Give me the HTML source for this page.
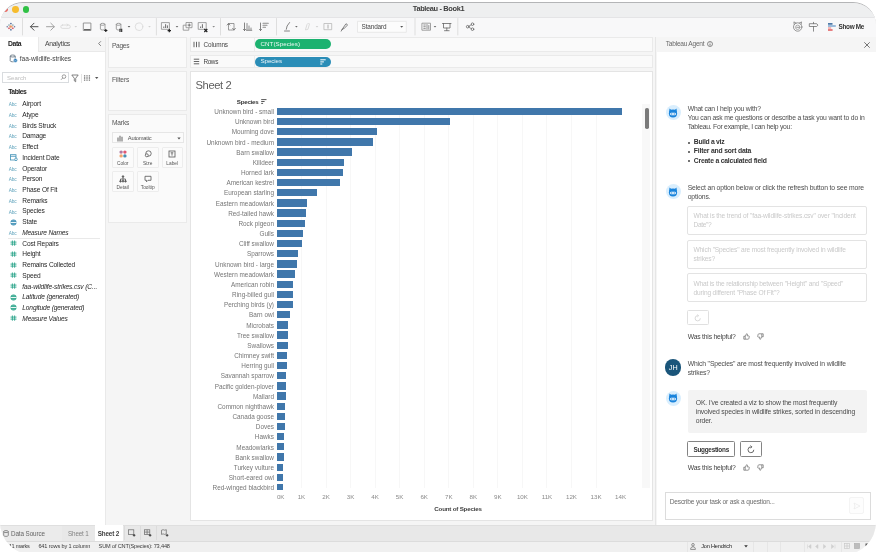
<!DOCTYPE html>
<html><head><meta charset="utf-8"><title>Tableau - Book1</title>
<style>
*{box-sizing:border-box;margin:0;padding:0}
html,body{width:876px;height:552px;overflow:hidden;background:#fff}
body{font-family:"Liberation Sans",sans-serif;font-size:6.6px;color:#333;position:relative}
#win{will-change:transform;position:absolute;left:0;top:2px;width:876px;height:553px;border-radius:23px 23px 33px 33px;overflow:hidden;background:#f5f5f5;border-top:1px solid #b4b5b7}
.a{position:absolute;white-space:nowrap;line-height:1}
svg{position:absolute;overflow:visible}
</style></head><body>
<div id="win">

<div class="a" style="left:0px;top:0px;width:876px;height:14px;background:#eeeff0"></div>
<div class="a" style="left:0px;top:14px;width:876px;height:19.5px;background:#f8f8f9;border-top:1px solid #e4e4e6"></div>
<div class="a" style="left:1.8px;top:3.3px;width:6.2px;height:6.2px;border-radius:50%;background:#ec5d55"></div>
<div class="a" style="left:12.2px;top:3px;width:6.8px;height:6.8px;border-radius:50%;background:#f6bc2e"></div>
<div class="a" style="left:22.5px;top:3px;width:6.8px;height:6.8px;border-radius:50%;background:#2fc145"></div>
<div class="a" style="left:407.75px;width:61.5px;text-align:center;top:2.47px;font-size:7.4px;color:#3c3c3c;letter-spacing:-0.34px;font-weight:bold;">Tableau - Book1</div>
<svg style="left:0px;top:14px" width="876" height="19" viewBox="0 0 876 19" fill="none" stroke="#555" stroke-width="0.900" stroke-linecap="round" stroke-linejoin="round"><g transform="translate(10.900,9.700) scale(0.660) translate(-10.500,-9.700)" stroke-linecap="butt"><path d="M10.500 7v5.400M7.800 9.700h5.400" stroke="#e8762c" stroke-width="1.100"/><path d="M7.600 6v2.600M6.300 7.300h2.600M13.400 6v2.600M12.100 7.300h2.600" stroke="#7099a6" stroke-width="0.900"/><path d="M7.600 10.800v2.600M6.300 12.100h2.600M13.400 10.800v2.600M12.100 12.100h2.600" stroke="#c72035" stroke-width="0.900"/><path d="M10.500 3.800v2.400M9.300 5h2.400M10.500 13.200v2.400M9.300 14.400h2.400" stroke="#1f447e" stroke-width="0.900"/><path d="M5 8.500v2.400M3.800 9.700h2.400M16 8.500v2.400M14.800 9.700h2.400" stroke="#5b6591" stroke-width="0.900"/></g><path d="M22.5 1.500v16.500" stroke="#dedede" stroke-width="1"/><path d="M38 9.700h-7.500M34 6.200l-3.500 3.500 3.500 3.500" stroke="#505050" stroke-width="1"/><path d="M46.500 9.700h7.800M50.800 6.200l3.500 3.500-3.500 3.500" stroke="#a2a2a2" stroke-width="1"/><rect x="60.800" y="8" width="9.500" height="3.400" rx="1.700" stroke="#d6d6d6" stroke-width="0.800"/><path d="M67 7l1.200 1-1.200 1" stroke="#d6d6d6" stroke-width="0.700"/><path d="M74.5 9l1.300 1.600 1.300-1.600z" fill="#d0d0d0" stroke="none"/><rect x="83.700" y="6" width="7.200" height="7.500" stroke="#8c8c8c" stroke-width="0.900"/><path d="M84 12.600h6.600" stroke="#666" stroke-width="1.400" stroke-linecap="butt"/><path d="M100.400 7.300v4.700a2.300 1 0 0 0 4.600 0V7.300a2.300 1 0 0 0 -4.600 0a2.300 1 0 0 0 4.600 0" stroke="#8c8c8c" stroke-width="0.800"/><path d="M104.200 13.500h3.200M105.800 11.900v3.200" stroke="#222" stroke-width="1.200" stroke-linecap="butt"/><path d="M116.300 7.300v4.700a2.300 1 0 0 0 4.600 0V7.300a2.300 1 0 0 0 -4.600 0a2.300 1 0 0 0 4.600 0" stroke="#8c8c8c" stroke-width="0.800"/><path d="M120 11.800v3.200M121.700 11.800v3.200" stroke="#222" stroke-width="1.100" stroke-linecap="butt"/><path d="M127.7 9l1.300 1.600 1.300-1.600z" fill="#555" stroke="none"/><circle cx="139" cy="9.700" r="3.800" stroke="#d8d8d8" stroke-width="0.800"/><path d="M148.2 9l1.300 1.600 1.300-1.600z" fill="#d0d0d0" stroke="none"/><path d="M156.4 1.500v16.500" stroke="#dedede" stroke-width="1"/><rect x="161.800" y="5.600" width="7.600" height="6.700" stroke="#8c8c8c" stroke-width="0.800"/><path d="M163.800 11v-1.500M165.600 11v-3.800M167.400 11v-2.600" stroke="#4a4a4a" stroke-width="0.800" stroke-linecap="butt"/><path d="M167.600 13.600h3.400M169.300 11.900v3.400" stroke="#222" stroke-width="1.200" stroke-linecap="butt"/><path d="M175.7 9l1.300 1.600 1.300-1.600z" fill="#666" stroke="none"/><rect x="183.600" y="8.200" width="5.200" height="5" stroke="#8c8c8c" stroke-width="0.800"/><rect x="186.400" y="5.500" width="5.600" height="5.200" stroke="#8c8c8c" stroke-width="0.800" fill="#f8f8f9"/><path d="M188 8.100h2.400M189.200 6.900v2.400" stroke="#4a4a4a" stroke-width="0.700"/><rect x="198.600" y="5.600" width="7.600" height="6.700" stroke="#8c8c8c" stroke-width="0.800"/><path d="M200.600 11v-1.500M202.400 11v-3.800" stroke="#4a4a4a" stroke-width="0.800" stroke-linecap="butt"/><path d="M204.300 12l3 3M207.300 12l-3 3" stroke="#222" stroke-width="1.200" stroke-linecap="butt"/><path d="M212.39999999999998 9l1.300 1.600 1.300-1.600z" fill="#888" stroke="none"/><path d="M220.5 1.500v16.500" stroke="#dedede" stroke-width="1"/><path d="M228.500 6.500h5.500v6.500h-5.500z" stroke="#8c8c8c" stroke-dasharray="1.200 0.800" stroke-width="0.900"/><path d="M227.200 8l1.300-1.300 1.300 1.300M232.700 11.500l1.300 1.300 1.300-1.300" stroke="#555" stroke-width="0.800"/><path d="M244.500 6v7.500M243.400 12.400l1.100 1.100 1.100-1.100" stroke="#666" stroke-width="0.800"/><path d="M247 6.500v6.500M249 9v4M251 11v2M246.500 13.300h5.300" stroke="#8c8c8c" stroke-width="1"/><path d="M260.500 6v7.500M259.400 12.400l1.100 1.100 1.100-1.100" stroke="#666" stroke-width="0.800"/><path d="M263 6.300h5.300M263 8.300h4M263 10.300h2.500" stroke="#8c8c8c" stroke-width="1.100"/><path d="M276.5 1.500v16.500" stroke="#dedede" stroke-width="1"/><path d="M286.300 12.300l0.800-3.300 2.500-3.500M284.500 14h5" stroke="#777" stroke-width="0.900"/><path d="M295.09999999999997 9l1.300 1.600 1.300-1.600z" fill="#666" stroke="none"/><path d="M305.500 12.500l1.500-5 1.500-1.500 1 1-1.500 5z" stroke="#d8d8d8" stroke-width="0.900"/><path d="M315.7 9l1.300 1.600 1.300-1.600z" fill="#d0d0d0" stroke="none"/><rect x="324.300" y="6.500" width="7.400" height="6.200" stroke="#b0b0b0" stroke-width="0.700"/><path d="M328 8v3.200" stroke="#999" stroke-width="0.800"/><path d="M342.200 12.300l3.800-5.600 1.600 1.300-2.800 2.800zM342.200 12.300l-1 1.800" stroke="#666" stroke-width="0.800"/><rect x="357.900" y="4.300" width="48.400" height="11" fill="#fcfcfc" stroke="#e6e6e6"/><path d="M400.200 9l1.500 1.800 1.500-1.800z" fill="#555" stroke="none"/><path d="M415 1.500v16.500" stroke="#dedede" stroke-width="1"/><rect x="422.300" y="6.200" width="8.200" height="7" stroke="#8c8c8c" stroke-width="0.800"/><path d="M423.800 8h1.500M423.800 9.700h1.500M423.800 11.400h1.500M427 7.500v4.500M428.800 8.500v3.500" stroke="#666" stroke-width="0.700"/><path d="M433.7 9l1.300 1.600 1.300-1.600z" fill="#666" stroke="none"/><path d="M442.500 6.500h8.500M443.500 6.500v4.500h6.500v-4.500M446.800 11v2.500M444.500 13.700h4.600" stroke="#666" stroke-width="0.800"/><path d="M457.8 1.500v16.500" stroke="#dedede" stroke-width="1"/><circle cx="467.700" cy="9.700" r="1.300" stroke="#666" stroke-width="0.800"/><circle cx="472.500" cy="7.200" r="1.300" stroke="#666" stroke-width="0.800"/><circle cx="472.500" cy="12.200" r="1.300" stroke="#666" stroke-width="0.800"/><path d="M468.900 9.100l2.400-1.300M468.900 10.300l2.400 1.300" stroke="#666" stroke-width="0.700"/><circle cx="797.700" cy="10" r="4.200" stroke="#808080" stroke-width="0.800"/><circle cx="797.700" cy="10.300" r="2.200" stroke="#909090" stroke-width="0.700"/><path d="M794.200 7.300l-0.300-2.400 2.200 1.200M801.200 7.300l0.300-2.400-2.200 1.200" stroke="#808080" stroke-width="0.800"/><path d="M796.700 10.300h2" stroke="#808080" stroke-width="0.800"/><path d="M809.700 6.700h7l1.200 1.400-1.200 1.400h-7zM813.500 5.300v1.400M813.500 9.500v4.700" stroke="#707070" stroke-width="0.800"/><path d="M828 6.800h4.500" stroke="#4e79a7" stroke-width="1.700" stroke-linecap="butt"/><path d="M828 8.900h7.800" stroke="#7fa8d1" stroke-width="1.500" stroke-linecap="butt"/><path d="M828 11h3.200" stroke="#f5a3a1" stroke-width="1.500" stroke-linecap="butt"/><path d="M828 13.100h4.600" stroke="#e15759" stroke-width="1.500" stroke-linecap="butt"/></svg>
<div class="a" style="left:361.5px;top:21.26px;font-size:6.4px;color:#444;letter-spacing:-0.12px;">Standard</div>
<div class="a" style="left:838.6px;top:21.36px;font-size:6.4px;color:#333;letter-spacing:-0.33px;font-weight:bold;">Show Me</div>
<div class="a" style="left:0px;top:33.5px;width:104.7px;height:488.5px;background:#fff"></div>
<div class="a" style="left:38px;top:33.5px;width:66.7px;height:15px;background:#f5f5f5;border-left:1px solid #e9e9e9;border-bottom:1px solid #e9e9e9"></div>
<div class="a" style="left:8px;top:38.27px;font-size:6.8px;color:#222;letter-spacing:-0.38px;font-weight:bold;">Data</div>
<div class="a" style="left:45px;top:38.37px;font-size:6.8px;color:#444;letter-spacing:-0.25px;">Analytics</div>
<svg style="left:98.3px;top:38.4px" width="4" height="5.2" viewBox="0 0 4 5.2" fill="none" stroke="#666" stroke-width="0.800"><path d="M2.900 0.300L0.600 2.600 2.900 4.900"/></svg>
<svg style="left:9.3px;top:51.4px" width="9" height="9" viewBox="0 0 9 9" fill="none" stroke="#5a6b78" stroke-width="0.800"><path d="M1.200 2v4.800a2.500 1 0 0 0 5 0V2a2.500 1 0 0 0 -5 0a2.500 1 0 0 0 5 0"/><circle cx="6.400" cy="6.500" r="2" fill="#2a7ab8" stroke="#fff" stroke-width="0.500"/><path d="M5.500 6.500l0.700 0.700 1.100-1.300" stroke="#fff" stroke-width="0.500"/></svg>
<div class="a" style="left:19.8px;top:52.67px;font-size:6.6px;color:#444;letter-spacing:-0.06px;">faa-wildlife-strikes</div>
<div class="a" style="left:2.3px;top:69.3px;width:67.2px;height:11px;border:1px solid #d9dcdf;background:#fff"></div>
<div class="a" style="left:7px;top:71.96px;font-size:6px;color:#bdbdbd;letter-spacing:0.08px;">Search</div>
<svg style="left:60.3px;top:71.2px" width="7" height="7" viewBox="0 0 7 7" fill="none" stroke="#777" stroke-width="0.700"><circle cx="4" cy="2.600" r="1.800"/><path d="M2.700 4L1 5.800"/></svg>
<svg style="left:71px;top:70.5px" width="8" height="9" viewBox="0 0 8 9" fill="none" stroke="#666" stroke-width="0.800"><path d="M0.800 1h6.400L4.700 4.300v3.500L3.300 6.800V4.300z"/></svg>
<div class="a" style="left:80.5px;top:70.5px;width:1px;height:9px;background:#e4e4e4"></div>
<svg style="left:83.8px;top:71.5px" width="18" height="6" viewBox="0 0 18 6" fill="none"><path d="M0.600 0.300v5.400M3 0.300v5.400M5.400 0.300v5.400" stroke="#777" stroke-width="1.300" stroke-dasharray="1.300 0.750"/><path d="M11 2l1.700 2 1.700-2z" fill="#555"/></svg>
<div class="a" style="left:8.2px;top:86.17px;font-size:6.8px;color:#222;letter-spacing:-0.47px;font-weight:bold;">Tables</div>
<div class="a" style="left:8.8px;top:100.2px;font-size:4.7px;color:#5aa0ba;letter-spacing:-0.17px;">Abc</div>
<div class="a" style="left:22.3px;top:98.17px;font-size:6.6px;color:#262626;letter-spacing:-0.12px;">Airport</div>
<div class="a" style="left:8.8px;top:110.93px;font-size:4.7px;color:#5aa0ba;letter-spacing:-0.17px;">Abc</div>
<div class="a" style="left:22.3px;top:108.9px;font-size:6.6px;color:#262626;letter-spacing:-0.15px;">Atype</div>
<div class="a" style="left:8.8px;top:121.66px;font-size:4.7px;color:#5aa0ba;letter-spacing:-0.17px;">Abc</div>
<div class="a" style="left:22.3px;top:119.63px;font-size:6.6px;color:#262626;letter-spacing:-0.13px;">Birds Struck</div>
<div class="a" style="left:8.8px;top:132.39px;font-size:4.7px;color:#5aa0ba;letter-spacing:-0.17px;">Abc</div>
<div class="a" style="left:22.3px;top:130.36px;font-size:6.6px;color:#262626;letter-spacing:-0.19px;">Damage</div>
<div class="a" style="left:8.8px;top:143.12px;font-size:4.7px;color:#5aa0ba;letter-spacing:-0.17px;">Abc</div>
<div class="a" style="left:22.3px;top:141.09px;font-size:6.6px;color:#262626;letter-spacing:-0.13px;">Effect</div>
<svg style="left:9.5px;top:151.15px" width="8" height="7" viewBox="0 0 8 7" fill="none" stroke="#3d8fb5" stroke-width="0.800"><rect x="0.500" y="0.700" width="5.500" height="5.300"/><path d="M0.500 2.300h5.500"/><circle cx="6" cy="5.300" r="1.300" fill="#fff"/></svg>
<div class="a" style="left:22.3px;top:151.82px;font-size:6.6px;color:#262626;letter-spacing:-0.13px;">Incident Date</div>
<div class="a" style="left:8.8px;top:164.58px;font-size:4.7px;color:#5aa0ba;letter-spacing:-0.17px;">Abc</div>
<div class="a" style="left:22.3px;top:162.55px;font-size:6.6px;color:#262626;letter-spacing:-0.15px;">Operator</div>
<div class="a" style="left:8.8px;top:175.31px;font-size:4.7px;color:#5aa0ba;letter-spacing:-0.17px;">Abc</div>
<div class="a" style="left:22.3px;top:173.28px;font-size:6.6px;color:#262626;letter-spacing:-0.16px;">Person</div>
<div class="a" style="left:8.8px;top:186.04px;font-size:4.7px;color:#5aa0ba;letter-spacing:-0.17px;">Abc</div>
<div class="a" style="left:22.3px;top:184.01px;font-size:6.6px;color:#262626;letter-spacing:-0.14px;">Phase Of Flt</div>
<div class="a" style="left:8.8px;top:196.77px;font-size:4.7px;color:#5aa0ba;letter-spacing:-0.17px;">Abc</div>
<div class="a" style="left:22.3px;top:194.74px;font-size:6.6px;color:#262626;letter-spacing:-0.17px;">Remarks</div>
<div class="a" style="left:8.8px;top:207.5px;font-size:4.7px;color:#5aa0ba;letter-spacing:-0.17px;">Abc</div>
<div class="a" style="left:22.3px;top:205.47px;font-size:6.6px;color:#262626;letter-spacing:-0.15px;">Species</div>
<svg style="left:9.8px;top:215.53px" width="7" height="7" viewBox="0 0 7 7" fill="none"><circle cx="3.500" cy="3.500" r="3" fill="#3d8fb5"/><path d="M0.500 3.500h6" stroke="#fff" stroke-width="0.900"/><path d="M1.500 1.900h4M1.500 5.100h4" stroke="#fff" stroke-width="0.300"/></svg>
<div class="a" style="left:22.3px;top:216.2px;font-size:6.6px;color:#262626;letter-spacing:-0.14px;">State</div>
<div class="a" style="left:8.8px;top:228.96px;font-size:4.7px;color:#5aa0ba;letter-spacing:-0.17px;">Abc</div>
<div class="a" style="left:22.3px;top:226.93px;font-size:6.6px;color:#262626;letter-spacing:-0.17px;font-style:italic;">Measure Names</div>
<svg style="left:10px;top:237.29px" width="7" height="6" viewBox="0 0 7 6" fill="none" stroke="#2ca58b" stroke-width="0.900"><path d="M0.500 2.100h6M0.500 4.100h6M2.400 0.500v5.200M4.600 0.500v5.200"/></svg>
<div class="a" style="left:22.3px;top:237.66px;font-size:6.6px;color:#262626;letter-spacing:-0.14px;">Cost Repairs</div>
<svg style="left:10px;top:248.02px" width="7" height="6" viewBox="0 0 7 6" fill="none" stroke="#2ca58b" stroke-width="0.900"><path d="M0.500 2.100h6M0.500 4.100h6M2.400 0.500v5.200M4.600 0.500v5.200"/></svg>
<div class="a" style="left:22.3px;top:248.39px;font-size:6.6px;color:#262626;letter-spacing:-0.14px;">Height</div>
<svg style="left:10px;top:258.75px" width="7" height="6" viewBox="0 0 7 6" fill="none" stroke="#2ca58b" stroke-width="0.900"><path d="M0.500 2.100h6M0.500 4.100h6M2.400 0.500v5.200M4.600 0.500v5.200"/></svg>
<div class="a" style="left:22.3px;top:259.12px;font-size:6.6px;color:#262626;letter-spacing:-0.15px;">Remains Collected</div>
<svg style="left:10px;top:269.48px" width="7" height="6" viewBox="0 0 7 6" fill="none" stroke="#2ca58b" stroke-width="0.900"><path d="M0.500 2.100h6M0.500 4.100h6M2.400 0.500v5.200M4.600 0.500v5.200"/></svg>
<div class="a" style="left:22.3px;top:269.85px;font-size:6.6px;color:#262626;letter-spacing:-0.17px;">Speed</div>
<svg style="left:10px;top:280.21px" width="7" height="6" viewBox="0 0 7 6" fill="none" stroke="#2ca58b" stroke-width="0.900"><path d="M0.500 2.100h6M0.500 4.100h6M2.400 0.500v5.200M4.600 0.500v5.200"/></svg>
<div class="a" style="left:22.3px;top:280.58px;font-size:6.6px;color:#262626;letter-spacing:-0.12px;font-style:italic;">faa-wildlife-strikes.csv (C...</div>
<svg style="left:9.8px;top:290.64px" width="7" height="7" viewBox="0 0 7 7" fill="none"><circle cx="3.500" cy="3.500" r="3" fill="#2ca58b"/><path d="M0.500 3.500h6" stroke="#fff" stroke-width="0.900"/><path d="M1.500 1.900h4M1.500 5.100h4" stroke="#fff" stroke-width="0.300"/></svg>
<div class="a" style="left:22.3px;top:291.31px;font-size:6.6px;color:#262626;letter-spacing:-0.13px;font-style:italic;">Latitude (generated)</div>
<svg style="left:9.8px;top:301.37px" width="7" height="7" viewBox="0 0 7 7" fill="none"><circle cx="3.500" cy="3.500" r="3" fill="#2ca58b"/><path d="M0.500 3.500h6" stroke="#fff" stroke-width="0.900"/><path d="M1.500 1.900h4M1.500 5.100h4" stroke="#fff" stroke-width="0.300"/></svg>
<div class="a" style="left:22.3px;top:302.04px;font-size:6.6px;color:#262626;letter-spacing:-0.14px;font-style:italic;">Longitude (generated)</div>
<svg style="left:10px;top:312.4px" width="7" height="6" viewBox="0 0 7 6" fill="none" stroke="#2ca58b" stroke-width="0.900"><path d="M0.500 2.100h6M0.500 4.100h6M2.400 0.500v5.200M4.600 0.500v5.200"/></svg>
<div class="a" style="left:22.3px;top:312.77px;font-size:6.6px;color:#262626;letter-spacing:-0.15px;font-style:italic;">Measure Values</div>
<div class="a" style="left:8px;top:234.7px;width:91.5px;height:1px;background:#e9e9e9"></div>
<div class="a" style="left:104.7px;top:33.5px;width:1px;height:488.5px;background:#e9e9e9"></div>
<div class="a" style="left:108.3px;top:34.3px;width:78.5px;height:30.7px;background:#fafafa;border:1px solid #eaeaea"></div>
<div class="a" style="left:112px;top:39.57px;font-size:6.6px;color:#555;letter-spacing:-0.3px;">Pages</div>
<div class="a" style="left:108.3px;top:68.3px;width:78.5px;height:40.2px;background:#fafafa;border:1px solid #eaeaea"></div>
<div class="a" style="left:112px;top:73.87px;font-size:6.6px;color:#555;letter-spacing:-0.11px;">Filters</div>
<div class="a" style="left:108.3px;top:111.3px;width:78.5px;height:108.4px;background:#fafafa;border:1px solid #eaeaea"></div>
<div class="a" style="left:112px;top:116.57px;font-size:6.6px;color:#555;letter-spacing:-0.15px;">Marks</div>
<div class="a" style="left:112px;top:129.4px;width:71.7px;height:11.1px;background:#fbfbfb;border:1px solid #e6e6e6"></div>
<svg style="left:117.3px;top:131.6px" width="6" height="7" viewBox="0 0 6 7" fill="none" stroke="#707070" stroke-width="1.100" stroke-linecap="butt"><path d="M1 2.500v4M3 0.800v5.700M5 1.800v4.700"/></svg>
<div class="a" style="left:127.8px;top:132.66px;font-size:5.8px;color:#555;letter-spacing:-0.25px;">Automatic</div>
<svg style="left:176.6px;top:133.8px" width="4" height="3" viewBox="0 0 4 3" ><path d="M0.300 0.400l1.700 2 1.700-2z" fill="#555"/></svg>
<div class="a" style="left:112px;top:143.5px;width:21.5px;height:21px;background:#fbfbfb;border:1px solid #ededed;border-radius:1px"></div>
<svg style="left:118.75px;top:147px" width="8" height="8" viewBox="0 0 8 8" fill="none" stroke="#555" stroke-width="0.800"><circle cx="2.100" cy="2.100" r="1.700" fill="#b07aa1" stroke="none"/><circle cx="5.900" cy="2.100" r="1.700" fill="#e15772" stroke="none"/><circle cx="2.100" cy="5.900" r="1.700" fill="#f2a66d" stroke="none"/><circle cx="5.900" cy="5.900" r="1.700" fill="#4a8fb2" stroke="none"/></svg>
<div class="a" style="left:112.01px;width:21.47px;text-align:center;top:158.55px;font-size:4.8px;color:#555;">Color</div>
<div class="a" style="left:137px;top:143.5px;width:21.5px;height:21px;background:#fbfbfb;border:1px solid #ededed;border-radius:1px"></div>
<svg style="left:143.75px;top:147px" width="8" height="8" viewBox="0 0 8 8" fill="none" stroke="#555" stroke-width="0.800"><circle cx="4.500" cy="3.500" r="2.700"/><circle cx="2.800" cy="5.300" r="1.500" fill="#fbfbfb"/></svg>
<div class="a" style="left:138.08px;width:19.34px;text-align:center;top:158.55px;font-size:4.8px;color:#555;">Size</div>
<div class="a" style="left:161.5px;top:143.5px;width:21.5px;height:21px;background:#fbfbfb;border:1px solid #ededed;border-radius:1px"></div>
<svg style="left:168.25px;top:147px" width="8" height="8" viewBox="0 0 8 8" fill="none" stroke="#555" stroke-width="0.800"><rect x="1" y="1" width="6" height="6"/><path d="M2.700 2.800h2.600M4 2.800v2.800"/></svg>
<div class="a" style="left:161.38px;width:21.74px;text-align:center;top:158.55px;font-size:4.8px;color:#555;">Label</div>
<div class="a" style="left:112px;top:168.3px;width:21.5px;height:20.5px;background:#fbfbfb;border:1px solid #ededed;border-radius:1px"></div>
<svg style="left:118.75px;top:171.8px" width="8" height="8" viewBox="0 0 8 8" fill="none" stroke="#555" stroke-width="0.800"><circle cx="4" cy="1.500" r="0.800" fill="#555"/><circle cx="1.500" cy="6.300" r="0.800" fill="#555"/><circle cx="4" cy="6.300" r="0.800" fill="#555"/><circle cx="6.500" cy="6.300" r="0.800" fill="#555"/><path d="M4 2v4M1.500 6V4h5v2"/></svg>
<div class="a" style="left:111.61px;width:22.27px;text-align:center;top:183.35px;font-size:4.8px;color:#555;">Detail</div>
<div class="a" style="left:137px;top:168.3px;width:21.5px;height:20.5px;background:#fbfbfb;border:1px solid #ededed;border-radius:1px"></div>
<svg style="left:143.75px;top:171.8px" width="8" height="8" viewBox="0 0 8 8" fill="none" stroke="#555" stroke-width="0.800"><path d="M1 1.300h6v4H4L2.500 6.800V5.300H1z"/></svg>
<div class="a" style="left:135.81px;width:23.88px;text-align:center;top:183.35px;font-size:4.8px;color:#555;">Tooltip</div>
<div class="a" style="left:190.2px;top:34.3px;width:463px;height:14.6px;background:#fafafa;border:1px solid #eaeaea"></div>
<div class="a" style="left:190.2px;top:51.7px;width:463px;height:13.7px;background:#fafafa;border:1px solid #eaeaea"></div>
<div class="a" style="left:253.5px;top:34.8px;width:1px;height:13.6px;background:#ececec"></div>
<div class="a" style="left:253.5px;top:52.2px;width:1px;height:12.7px;background:#ececec"></div>
<svg style="left:193.2px;top:38px" width="7" height="7" viewBox="0 0 7 7" fill="none" stroke="#555" stroke-width="0.900"><path d="M1 0.800v5.400M3.500 0.800v5.400M6 0.800v5.400"/></svg>
<div class="a" style="left:203.4px;top:38.66px;font-size:6.4px;color:#444;letter-spacing:-0.09px;">Columns</div>
<svg style="left:193.2px;top:55px" width="7" height="7" viewBox="0 0 7 7" fill="none" stroke="#555" stroke-width="0.900"><path d="M0.800 1.200h5.400M0.800 3.500h5.400M0.800 5.800h5.400"/></svg>
<div class="a" style="left:203.4px;top:55.86px;font-size:6.4px;color:#444;letter-spacing:-0.35px;">Rows</div>
<div class="a" style="left:255px;top:36.1px;width:75.7px;height:10.2px;border-radius:5.100px;background:#1cb270"></div>
<div class="a" style="left:260.5px;top:38.06px;font-size:6.2px;color:rgba(255,255,255,0.92);letter-spacing:0.06px;">CNT(Species)</div>
<div class="a" style="left:255px;top:53.5px;width:75.7px;height:10.2px;border-radius:5.100px;background:#2a8db7"></div>
<div class="a" style="left:260.5px;top:55.36px;font-size:6.2px;color:rgba(255,255,255,0.92);letter-spacing:-0.09px;">Species</div>
<svg style="left:319.5px;top:55.7px" width="6" height="6" viewBox="0 0 6 6" fill="none" stroke="#fff" stroke-width="1"><path d="M0.300 0.800h5.400M0.300 2.900h3.600M0.300 5h2"/></svg>
<div class="a" style="left:190.2px;top:68.4px;width:463px;height:449.6px;background:#fff;border:1px solid #e4e4e4"></div>
<div class="a" style="left:195.5px;top:76.91px;font-size:11.2px;color:#5e5e5e;letter-spacing:-0.4px;">Sheet 2</div>
<div class="a" style="left:236.8px;top:96.26px;font-size:6.2px;color:#333;letter-spacing:-0.25px;font-weight:bold;">Species</div>
<svg style="left:260.5px;top:96.3px" width="6" height="5" viewBox="0 0 6 5" fill="none" stroke="#444" stroke-width="0.900"><path d="M0.200 0.600h5.300M0.200 2.500h3.400M0.200 4.400h1.900"/></svg>
<div class="a" style="left:300.95px;top:104.5px;width:1px;height:380.5px;background:#f7f7f7"></div>
<div class="a" style="left:325.5px;top:104.5px;width:1px;height:380.5px;background:#f7f7f7"></div>
<div class="a" style="left:350.05px;top:104.5px;width:1px;height:380.5px;background:#f7f7f7"></div>
<div class="a" style="left:374.6px;top:104.5px;width:1px;height:380.5px;background:#f7f7f7"></div>
<div class="a" style="left:399.15px;top:104.5px;width:1px;height:380.5px;background:#f7f7f7"></div>
<div class="a" style="left:423.7px;top:104.5px;width:1px;height:380.5px;background:#f7f7f7"></div>
<div class="a" style="left:448.25px;top:104.5px;width:1px;height:380.5px;background:#f7f7f7"></div>
<div class="a" style="left:472.8px;top:104.5px;width:1px;height:380.5px;background:#f7f7f7"></div>
<div class="a" style="left:497.35px;top:104.5px;width:1px;height:380.5px;background:#f7f7f7"></div>
<div class="a" style="left:521.9px;top:104.5px;width:1px;height:380.5px;background:#f7f7f7"></div>
<div class="a" style="left:546.45px;top:104.5px;width:1px;height:380.5px;background:#f7f7f7"></div>
<div class="a" style="left:571px;top:104.5px;width:1px;height:380.5px;background:#f7f7f7"></div>
<div class="a" style="left:595.55px;top:104.5px;width:1px;height:380.5px;background:#f7f7f7"></div>
<div class="a" style="left:212.25px;width:61.76px;text-align:right;top:106.06px;font-size:6.4px;color:#767676;">Unknown bird - small</div>
<div class="a" style="left:277px;top:104.75px;width:345px;height:7.3px;background:#4077ab"></div>
<div class="a" style="left:232.87px;width:41.13px;text-align:right;top:116.23px;font-size:6.4px;color:#767676;">Unknown bird</div>
<div class="a" style="left:277px;top:114.91px;width:173px;height:7.3px;background:#4077ab"></div>
<div class="a" style="left:229.66px;width:44.34px;text-align:right;top:126.39px;font-size:6.4px;color:#767676;">Mourning dove</div>
<div class="a" style="left:277px;top:125.08px;width:100px;height:7.3px;background:#4077ab"></div>
<div class="a" style="left:204.42px;width:69.58px;text-align:right;top:136.56px;font-size:6.4px;color:#767676;">Unknown bird - medium</div>
<div class="a" style="left:277px;top:135.25px;width:96px;height:7.3px;background:#4077ab"></div>
<div class="a" style="left:234.3px;width:39.7px;text-align:right;top:146.72px;font-size:6.4px;color:#767676;">Barn swallow</div>
<div class="a" style="left:277px;top:145.41px;width:75px;height:7.3px;background:#4077ab"></div>
<div class="a" style="left:250.66px;width:23.34px;text-align:right;top:156.89px;font-size:6.4px;color:#767676;">Killdeer</div>
<div class="a" style="left:277px;top:155.57px;width:67px;height:7.3px;background:#4077ab"></div>
<div class="a" style="left:238.92px;width:35.08px;text-align:right;top:167.05px;font-size:6.4px;color:#767676;">Horned lark</div>
<div class="a" style="left:277px;top:165.74px;width:66px;height:7.3px;background:#4077ab"></div>
<div class="a" style="left:224.34px;width:49.66px;text-align:right;top:177.22px;font-size:6.4px;color:#767676;">American kestrel</div>
<div class="a" style="left:277px;top:175.91px;width:63px;height:7.3px;background:#4077ab"></div>
<div class="a" style="left:221.83px;width:52.17px;text-align:right;top:187.38px;font-size:6.4px;color:#767676;">European starling</div>
<div class="a" style="left:277px;top:186.07px;width:40px;height:7.3px;background:#4077ab"></div>
<div class="a" style="left:213.66px;width:60.34px;text-align:right;top:197.55px;font-size:6.4px;color:#767676;">Eastern meadowlark</div>
<div class="a" style="left:277px;top:196.23px;width:30px;height:7.3px;background:#4077ab"></div>
<div class="a" style="left:226.11px;width:47.89px;text-align:right;top:207.71px;font-size:6.4px;color:#767676;">Red-tailed hawk</div>
<div class="a" style="left:277px;top:206.4px;width:29px;height:7.3px;background:#4077ab"></div>
<div class="a" style="left:236.42px;width:37.58px;text-align:right;top:217.88px;font-size:6.4px;color:#767676;">Rock pigeon</div>
<div class="a" style="left:277px;top:216.56px;width:28px;height:7.3px;background:#4077ab"></div>
<div class="a" style="left:257.42px;width:16.58px;text-align:right;top:228.04px;font-size:6.4px;color:#767676;">Gulls</div>
<div class="a" style="left:277px;top:226.73px;width:26px;height:7.3px;background:#4077ab"></div>
<div class="a" style="left:236.91px;width:37.09px;text-align:right;top:238.21px;font-size:6.4px;color:#767676;">Cliff swallow</div>
<div class="a" style="left:277px;top:236.89px;width:25px;height:7.3px;background:#4077ab"></div>
<div class="a" style="left:244.97px;width:29.03px;text-align:right;top:248.37px;font-size:6.4px;color:#767676;">Sparrows</div>
<div class="a" style="left:277px;top:247.06px;width:21px;height:7.3px;background:#4077ab"></div>
<div class="a" style="left:212.95px;width:61.05px;text-align:right;top:258.54px;font-size:6.4px;color:#767676;">Unknown bird - large</div>
<div class="a" style="left:277px;top:257.23px;width:20px;height:7.3px;background:#4077ab"></div>
<div class="a" style="left:212px;width:62px;text-align:right;top:268.7px;font-size:6.4px;color:#767676;">Western meadowlark</div>
<div class="a" style="left:277px;top:267.39px;width:18px;height:7.3px;background:#4077ab"></div>
<div class="a" style="left:228.96px;width:45.04px;text-align:right;top:278.87px;font-size:6.4px;color:#767676;">American robin</div>
<div class="a" style="left:277px;top:277.56px;width:16px;height:7.3px;background:#4077ab"></div>
<div class="a" style="left:230.02px;width:43.98px;text-align:right;top:289.03px;font-size:6.4px;color:#767676;">Ring-billed gull</div>
<div class="a" style="left:277px;top:287.72px;width:16px;height:7.3px;background:#4077ab"></div>
<div class="a" style="left:221.85px;width:52.15px;text-align:right;top:299.2px;font-size:6.4px;color:#767676;">Perching birds (y)</div>
<div class="a" style="left:277px;top:297.88px;width:16px;height:7.3px;background:#4077ab"></div>
<div class="a" style="left:247.1px;width:26.9px;text-align:right;top:309.36px;font-size:6.4px;color:#767676;">Barn owl</div>
<div class="a" style="left:277px;top:308.05px;width:13px;height:7.3px;background:#4077ab"></div>
<div class="a" style="left:244.26px;width:29.74px;text-align:right;top:319.53px;font-size:6.4px;color:#767676;">Microbats</div>
<div class="a" style="left:277px;top:318.22px;width:11px;height:7.3px;background:#4077ab"></div>
<div class="a" style="left:234.89px;width:39.11px;text-align:right;top:329.69px;font-size:6.4px;color:#767676;">Tree swallow</div>
<div class="a" style="left:277px;top:328.38px;width:11px;height:7.3px;background:#4077ab"></div>
<div class="a" style="left:245.32px;width:28.68px;text-align:right;top:339.86px;font-size:6.4px;color:#767676;">Swallows</div>
<div class="a" style="left:277px;top:338.55px;width:11px;height:7.3px;background:#4077ab"></div>
<div class="a" style="left:232.17px;width:41.83px;text-align:right;top:350.02px;font-size:6.4px;color:#767676;">Chimney swift</div>
<div class="a" style="left:277px;top:348.71px;width:10px;height:7.3px;background:#4077ab"></div>
<div class="a" style="left:239.27px;width:34.73px;text-align:right;top:360.19px;font-size:6.4px;color:#767676;">Herring gull</div>
<div class="a" style="left:277px;top:358.88px;width:10px;height:7.3px;background:#4077ab"></div>
<div class="a" style="left:218.63px;width:55.37px;text-align:right;top:370.35px;font-size:6.4px;color:#767676;">Savannah sparrow</div>
<div class="a" style="left:277px;top:369.04px;width:9px;height:7.3px;background:#4077ab"></div>
<div class="a" style="left:212.59px;width:61.41px;text-align:right;top:380.52px;font-size:6.4px;color:#767676;">Pacific golden-plover</div>
<div class="a" style="left:277px;top:379.21px;width:9px;height:7.3px;background:#4077ab"></div>
<div class="a" style="left:251.01px;width:22.99px;text-align:right;top:390.68px;font-size:6.4px;color:#767676;">Mallard</div>
<div class="a" style="left:277px;top:389.37px;width:9px;height:7.3px;background:#4077ab"></div>
<div class="a" style="left:215.44px;width:58.56px;text-align:right;top:400.85px;font-size:6.4px;color:#767676;">Common nighthawk</div>
<div class="a" style="left:277px;top:399.53px;width:8px;height:7.3px;background:#4077ab"></div>
<div class="a" style="left:230.36px;width:43.64px;text-align:right;top:411.01px;font-size:6.4px;color:#767676;">Canada goose</div>
<div class="a" style="left:277px;top:409.7px;width:8px;height:7.3px;background:#4077ab"></div>
<div class="a" style="left:253.86px;width:20.14px;text-align:right;top:421.18px;font-size:6.4px;color:#767676;">Doves</div>
<div class="a" style="left:277px;top:419.87px;width:8px;height:7.3px;background:#4077ab"></div>
<div class="a" style="left:252.8px;width:21.2px;text-align:right;top:431.34px;font-size:6.4px;color:#767676;">Hawks</div>
<div class="a" style="left:277px;top:430.03px;width:7px;height:7.3px;background:#4077ab"></div>
<div class="a" style="left:234.3px;width:39.7px;text-align:right;top:441.51px;font-size:6.4px;color:#767676;">Meadowlarks</div>
<div class="a" style="left:277px;top:440.2px;width:7px;height:7.3px;background:#4077ab"></div>
<div class="a" style="left:233.23px;width:40.77px;text-align:right;top:451.67px;font-size:6.4px;color:#767676;">Bank swallow</div>
<div class="a" style="left:277px;top:450.36px;width:7px;height:7.3px;background:#4077ab"></div>
<div class="a" style="left:231.69px;width:42.31px;text-align:right;top:461.84px;font-size:6.4px;color:#767676;">Turkey vulture</div>
<div class="a" style="left:277px;top:460.52px;width:6px;height:7.3px;background:#4077ab"></div>
<div class="a" style="left:226.82px;width:47.18px;text-align:right;top:472px;font-size:6.4px;color:#767676;">Short-eared owl</div>
<div class="a" style="left:277px;top:470.69px;width:6px;height:7.3px;background:#4077ab"></div>
<div class="a" style="left:210.45px;width:63.55px;text-align:right;top:482.17px;font-size:6.4px;color:#767676;">Red-winged blackbird</div>
<div class="a" style="left:277px;top:480.86px;width:6px;height:5.8px;background:#4077ab"></div>
<div class="a" style="left:271.91px;width:17.58px;text-align:center;top:491.36px;font-size:6.2px;color:#8a8a8a;">0K</div>
<div class="a" style="left:292.66px;width:17.58px;text-align:center;top:491.36px;font-size:6.2px;color:#8a8a8a;">1K</div>
<div class="a" style="left:317.21px;width:17.58px;text-align:center;top:491.36px;font-size:6.2px;color:#8a8a8a;">2K</div>
<div class="a" style="left:341.76px;width:17.58px;text-align:center;top:491.36px;font-size:6.2px;color:#8a8a8a;">3K</div>
<div class="a" style="left:366.31px;width:17.58px;text-align:center;top:491.36px;font-size:6.2px;color:#8a8a8a;">4K</div>
<div class="a" style="left:390.86px;width:17.58px;text-align:center;top:491.36px;font-size:6.2px;color:#8a8a8a;">5K</div>
<div class="a" style="left:415.41px;width:17.58px;text-align:center;top:491.36px;font-size:6.2px;color:#8a8a8a;">6K</div>
<div class="a" style="left:439.96px;width:17.58px;text-align:center;top:491.36px;font-size:6.2px;color:#8a8a8a;">7K</div>
<div class="a" style="left:464.51px;width:17.58px;text-align:center;top:491.36px;font-size:6.2px;color:#8a8a8a;">8K</div>
<div class="a" style="left:489.06px;width:17.58px;text-align:center;top:491.36px;font-size:6.2px;color:#8a8a8a;">9K</div>
<div class="a" style="left:511.88px;width:21.03px;text-align:center;top:491.36px;font-size:6.2px;color:#8a8a8a;">10K</div>
<div class="a" style="left:536.66px;width:20.57px;text-align:center;top:491.36px;font-size:6.2px;color:#8a8a8a;">11K</div>
<div class="a" style="left:560.98px;width:21.03px;text-align:center;top:491.36px;font-size:6.2px;color:#8a8a8a;">12K</div>
<div class="a" style="left:585.53px;width:21.03px;text-align:center;top:491.36px;font-size:6.2px;color:#8a8a8a;">13K</div>
<div class="a" style="left:610.08px;width:21.03px;text-align:center;top:491.36px;font-size:6.2px;color:#8a8a8a;">14K</div>
<div class="a" style="left:429.25px;width:57.5px;text-align:center;top:502.86px;font-size:6.2px;color:#404040;letter-spacing:-0.2px;font-weight:bold;">Count of Species</div>
<div class="a" style="left:642.2px;top:100.5px;width:8px;height:384.5px;background:#f8f8f8"></div>
<div class="a" style="left:645px;top:105px;width:3.5px;height:20.5px;border-radius:1.750px;background:#7a7a7a"></div>
<div class="a" style="left:653.2px;top:33.5px;width:3.3px;height:488.5px;background:#f6f6f6;border-right:1px solid #e6e6e6"></div>
<div class="a" style="left:656.5px;top:33.5px;width:220px;height:488.5px;background:#fff"></div>
<div class="a" style="left:656.5px;top:33.5px;width:220px;height:15.2px;background:#f5f5f5"></div>
<div class="a" style="left:665.8px;top:38.27px;font-size:6.6px;color:#6a6a6a;letter-spacing:-0.25px;">Tableau Agent</div>
<svg style="left:706.8px;top:38.2px" width="6" height="6" viewBox="0 0 6 6" fill="none" stroke="#555" stroke-width="0.650" stroke-linecap="butt"><circle cx="3" cy="3" r="2.500"/><path d="M3 2.600v2" stroke-width="0.800"/><path d="M3 1.400v0.500" stroke-width="0.800"/></svg>
<svg style="left:864.1px;top:38.7px" width="6" height="6" viewBox="0 0 6 6" fill="none" stroke="#555" stroke-width="0.800"><path d="M0.300 0.300l5.400 5.400M5.700 0.300l-5.400 5.400"/></svg>
<div class="a" style="left:665.8px;top:102px;width:15.2px;height:15.2px;border-radius:50%;background:#d9eefd"></div>
<svg style="left:668.4px;top:104.6px" width="10" height="10" viewBox="-5 -5 10 10" fill="#1a84dc" stroke="none"><circle cx="0" cy="0.500" r="4.100"/><path d="M-4 0L-3.500 -4.400L-1.700 -3.100ZM4 0L3.500 -4.400L1.700 -3.100Z"/><rect x="-2.900" y="-0.300" width="5.800" height="2.500" rx="1.250" fill="#fff"/><circle cx="-1.200" cy="0.950" r="0.700"/><circle cx="1.200" cy="0.950" r="0.700"/></svg>
<div class="a" style="left:687.7px;top:102.77px;font-size:6.8px;color:#4c4c4c;letter-spacing:-0.19px;">What can I help you with?</div>
<div class="a" style="left:687.7px;top:111.77px;font-size:6.8px;color:#4c4c4c;letter-spacing:-0.18px;">You can ask me questions or describe a task you want to do in</div>
<div class="a" style="left:687.7px;top:120.77px;font-size:6.8px;color:#4c4c4c;letter-spacing:-0.25px;">Tableau. For example, I can help you:</div>
<div class="a" style="left:687.5px;top:138.5px;width:2px;height:2px;border-radius:50%;background:#444"></div>
<div class="a" style="left:693.8px;top:136.17px;font-size:6.8px;color:#333;letter-spacing:-0.28px;font-weight:bold;">Build a viz</div>
<div class="a" style="left:687.5px;top:147.5px;width:2px;height:2px;border-radius:50%;background:#444"></div>
<div class="a" style="left:693.8px;top:145.42px;font-size:6.8px;color:#333;letter-spacing:-0.19px;font-weight:bold;">Filter and sort data</div>
<div class="a" style="left:687.5px;top:156.5px;width:2px;height:2px;border-radius:50%;background:#444"></div>
<div class="a" style="left:693.8px;top:154.67px;font-size:6.8px;color:#333;letter-spacing:-0.2px;font-weight:bold;">Create a calculated field</div>
<div class="a" style="left:665.8px;top:180.9px;width:15.2px;height:15.2px;border-radius:50%;background:#d9eefd"></div>
<svg style="left:668.4px;top:183.5px" width="10" height="10" viewBox="-5 -5 10 10" fill="#1a84dc" stroke="none"><circle cx="0" cy="0.500" r="4.100"/><path d="M-4 0L-3.500 -4.400L-1.700 -3.100ZM4 0L3.500 -4.400L1.700 -3.100Z"/><rect x="-2.900" y="-0.300" width="5.800" height="2.500" rx="1.250" fill="#fff"/><circle cx="-1.200" cy="0.950" r="0.700"/><circle cx="1.200" cy="0.950" r="0.700"/></svg>
<div class="a" style="left:687.7px;top:181.77px;font-size:6.8px;color:#4c4c4c;letter-spacing:-0.13px;">Select an option below or click the refresh button to see more</div>
<div class="a" style="left:687.7px;top:190.97px;font-size:6.8px;color:#4c4c4c;letter-spacing:-0.13px;">options.</div>
<div class="a" style="left:687.3px;top:202.8px;width:179.6px;height:29px;border:1px solid #e3e3e3;border-radius:2px;background:#fff"></div>
<div class="a" style="left:693.5px;top:210.17px;font-size:6.6px;color:#c9c9c9;letter-spacing:-0.12px;">What is the trend of "faa-wildlife-strikes.csv" over "Incident</div>
<div class="a" style="left:693.5px;top:219.17px;font-size:6.6px;color:#c9c9c9;letter-spacing:-0.33px;">Date"?</div>
<div class="a" style="left:687.3px;top:236.5px;width:179.6px;height:29px;border:1px solid #e3e3e3;border-radius:2px;background:#fff"></div>
<div class="a" style="left:693.5px;top:243.87px;font-size:6.6px;color:#c9c9c9;letter-spacing:-0.16px;">Which "Species" are most frequently involved in wildlife</div>
<div class="a" style="left:693.5px;top:252.87px;font-size:6.6px;color:#c9c9c9;letter-spacing:-0.15px;">strikes?</div>
<div class="a" style="left:687.3px;top:270.2px;width:179.6px;height:29px;border:1px solid #e3e3e3;border-radius:2px;background:#fff"></div>
<div class="a" style="left:693.5px;top:277.57px;font-size:6.6px;color:#c9c9c9;letter-spacing:-0.18px;">What is the relationship between "Height" and "Speed"</div>
<div class="a" style="left:693.5px;top:286.57px;font-size:6.6px;color:#c9c9c9;letter-spacing:-0.15px;">during different "Phase Of Flt"?</div>
<div class="a" style="left:687.3px;top:307.3px;width:21.4px;height:15px;border:1px solid #e0e0e0;border-radius:1.500px;background:#fff"></div>
<svg style="left:694px;top:310.8px" width="8" height="8" viewBox="0 0 8 8" fill="none" stroke="#cfcfcf" stroke-width="0.800"><path d="M6.300 4.300a2.600 2.600 0 1 1-2.300-2.600"/><path d="M3.400 0.500l1.300 1.200-1.300 1.200"/></svg>
<div class="a" style="left:687.7px;top:330.77px;font-size:6.8px;color:#444;letter-spacing:-0.21px;">Was this helpful?</div>
<svg style="left:742.7px;top:329.7px" width="7" height="7" viewBox="0 0 7 7" fill="none" stroke="#6a6a6a" stroke-width="0.700"><path d="M0.800 3.200h1.400v3h-1.400zM2.200 3.300l1.400-2.600c0.800 0 1 0.600 0.800 1.300l-0.200 0.900h1.500c0.500 0 0.700 0.400 0.600 0.800l-0.500 2c-0.100 0.400-0.400 0.500-0.800 0.500h-2.800"/></svg>
<svg style="left:757.3px;top:330.2px" width="7" height="7" viewBox="0 0 7 7" fill="none" stroke="#6a6a6a" stroke-width="0.700"><path d="M6.200 3.800h-1.400v-3h1.400zM4.800 3.700l-1.400 2.600c-0.800 0-1-0.600-0.800-1.300l0.200-0.900h-1.500c-0.500 0-0.700-0.400-0.600-0.800l0.500-2c0.100-0.400 0.400-0.500 0.800-0.500h2.800"/></svg>
<div class="a" style="left:665.1px;top:356.4px;width:16.2px;height:16.2px;border-radius:50%;background:#1a557a"></div>
<div class="a" style="left:663.8px;width:18.8px;text-align:center;top:361.37px;font-size:7.2px;color:#fff;">JH</div>
<div class="a" style="left:687.7px;top:357.97px;font-size:6.8px;color:#4c4c4c;letter-spacing:-0.14px;">Which "Species" are most frequently involved in wildlife</div>
<div class="a" style="left:687.7px;top:367.07px;font-size:6.8px;color:#4c4c4c;letter-spacing:-0.14px;">strikes?</div>
<div class="a" style="left:665.8px;top:387.6px;width:15.2px;height:15.2px;border-radius:50%;background:#d9eefd"></div>
<svg style="left:668.4px;top:390.2px" width="10" height="10" viewBox="-5 -5 10 10" fill="#1a84dc" stroke="none"><circle cx="0" cy="0.500" r="4.100"/><path d="M-4 0L-3.500 -4.400L-1.700 -3.100ZM4 0L3.500 -4.400L1.700 -3.100Z"/><rect x="-2.900" y="-0.300" width="5.800" height="2.500" rx="1.250" fill="#fff"/><circle cx="-1.200" cy="0.950" r="0.700"/><circle cx="1.200" cy="0.950" r="0.700"/></svg>
<div class="a" style="left:687.7px;top:386.9px;width:179.6px;height:43.4px;background:#f3f3f3;border-radius:2px"></div>
<div class="a" style="left:695.8px;top:396.57px;font-size:6.8px;color:#4c4c4c;letter-spacing:-0.16px;">OK. I've created a viz to show the most frequently</div>
<div class="a" style="left:695.8px;top:405.67px;font-size:6.8px;color:#4c4c4c;letter-spacing:-0.14px;">involved species in wildlife strikes, sorted in descending</div>
<div class="a" style="left:695.8px;top:414.87px;font-size:6.8px;color:#4c4c4c;letter-spacing:-0.15px;">order.</div>
<div class="a" style="left:687.3px;top:438.4px;width:47.7px;height:15.4px;border:1px solid #848484;border-radius:1.500px;background:#fff"></div>
<div class="a" style="left:688.45px;width:45.5px;text-align:center;top:443.66px;font-size:6.4px;color:#333;letter-spacing:-0.26px;font-weight:bold;">Suggestions</div>
<div class="a" style="left:740.2px;top:438.4px;width:21.4px;height:15.4px;border:1px solid #848484;border-radius:1.500px;background:#fff"></div>
<svg style="left:746.9px;top:441.7px" width="8" height="9" viewBox="0 0 8 9" fill="none" stroke="#444" stroke-width="0.800"><path d="M6.800 4.800a2.900 2.900 0 1 1-2.600-2.900"/><path d="M3.500 0.500l1.400 1.400-1.400 1.400"/></svg>
<div class="a" style="left:687.7px;top:461.87px;font-size:6.8px;color:#444;letter-spacing:-0.21px;">Was this helpful?</div>
<svg style="left:742.7px;top:460.8px" width="7" height="7" viewBox="0 0 7 7" fill="none" stroke="#6a6a6a" stroke-width="0.700"><path d="M0.800 3.200h1.400v3h-1.400zM2.200 3.300l1.400-2.600c0.800 0 1 0.600 0.800 1.300l-0.200 0.900h1.500c0.500 0 0.700 0.400 0.600 0.800l-0.500 2c-0.100 0.400-0.400 0.500-0.800 0.500h-2.800"/></svg>
<svg style="left:757.3px;top:461.3px" width="7" height="7" viewBox="0 0 7 7" fill="none" stroke="#6a6a6a" stroke-width="0.700"><path d="M6.200 3.800h-1.400v-3h1.400zM4.800 3.700l-1.400 2.600c-0.800 0-1-0.600-0.800-1.300l0.200-0.900h-1.500c-0.500 0-0.700-0.400-0.600-0.800l0.500-2c0.100-0.400 0.400-0.500 0.800-0.500h2.800"/></svg>
<div class="a" style="left:664.8px;top:489px;width:206px;height:27.5px;border:1px solid #dcdcdc;background:#fff"></div>
<div class="a" style="left:669.8px;top:495.87px;font-size:6.6px;color:#6c6c6c;letter-spacing:-0.19px;">Describe your task or ask a question...</div>
<div class="a" style="left:849px;top:494.3px;width:15px;height:16.3px;border:1px solid #f4f4f4;border-radius:2px;background:#fdfdfd"></div>
<svg style="left:852.5px;top:498.5px" width="8" height="8" viewBox="0 0 8 8" fill="none" stroke="#ebebeb" stroke-width="0.800"><path d="M1 1l6 3-6 3 1-3z"/></svg>
<div class="a" style="left:0px;top:521.7px;width:876px;height:16px;background:#e8e8e8;border-top:1px solid #dfdfdf"></div>
<div class="a" style="left:0px;top:521.7px;width:62px;height:16px;background:#ebebeb;border-top:1px solid #dfdfdf"></div>
<div class="a" style="left:0px;top:537.7px;width:876px;height:20px;background:#f0f0f0;border-top:1px solid #dcdcdc"></div>
<svg style="left:2.7px;top:526.5px" width="6" height="7" viewBox="0 0 6 7" fill="none" stroke="#666" stroke-width="0.700"><ellipse cx="3" cy="1.600" rx="2.300" ry="1"/><path d="M0.700 1.600v3.800a2.300 1 0 0 0 4.600 0V1.600"/></svg>
<div class="a" style="left:11px;top:527.61px;font-size:6.3px;color:#666;letter-spacing:-0.09px;">Data Source</div>
<div class="a" style="left:68px;top:527.61px;font-size:6.3px;color:#838383;letter-spacing:-0.16px;">Sheet 1</div>
<div class="a" style="left:94.7px;top:522.2px;width:28.6px;height:15.5px;background:#fff"></div>
<div class="a" style="left:97.7px;top:527.61px;font-size:6.3px;color:#404040;letter-spacing:-0.13px;font-weight:bold;">Sheet 2</div>
<div class="a" style="left:124px;top:523px;width:1px;height:14px;background:#dcdcdc"></div>
<div class="a" style="left:139.7px;top:523px;width:1px;height:14px;background:#dcdcdc"></div>
<div class="a" style="left:155.7px;top:523px;width:1px;height:14px;background:#dcdcdc"></div>
<svg style="left:128px;top:526.3px" width="8" height="8" viewBox="0 0 8 8" fill="none" stroke="#666" stroke-width="0.700"><rect x="0.500" y="0.800" width="5.300" height="4.600"/><path d="M4.800 6.300h2.600M6.100 5v2.600" stroke="#333" stroke-width="0.900"/></svg>
<svg style="left:144px;top:526.3px" width="8" height="8" viewBox="0 0 8 8" fill="none" stroke="#666" stroke-width="0.700"><rect x="0.500" y="0.800" width="5.300" height="4.600"/><path d="M0.500 3.100h5.300M3.100 0.800v4.600" /><path d="M4.800 6.300h2.600M6.100 5v2.600" stroke="#333" stroke-width="0.900"/></svg>
<svg style="left:160.5px;top:526.3px" width="8" height="8" viewBox="0 0 8 8" fill="none" stroke="#666" stroke-width="0.700"><path d="M0.500 1.200l1.600-0.500 1.600 0.500 1.600-0.500v4.200l-1.600 0.500-1.600-0.500-1.600 0.500z"/><path d="M4.800 6.300h2.600M6.100 5v2.600" stroke="#333" stroke-width="0.900"/></svg>
<div class="a" style="left:9px;top:541.06px;font-size:5.6px;color:#3a3a3a;letter-spacing:-0.24px;">11 marks</div>
<div class="a" style="left:38.4px;top:541.06px;font-size:5.6px;color:#3a3a3a;letter-spacing:-0.13px;">641 rows by 1 column</div>
<div class="a" style="left:98.6px;top:541.06px;font-size:5.6px;color:#3a3a3a;letter-spacing:-0.16px;">SUM of CNT(Species): 73,448</div>
<div class="a" style="left:687.4px;top:538.7px;width:1px;height:11px;background:#e6e6e6"></div>
<div class="a" style="left:753.4px;top:538.7px;width:1px;height:11px;background:#e6e6e6"></div>
<div class="a" style="left:766.8px;top:538.7px;width:1px;height:11px;background:#e6e6e6"></div>
<div class="a" style="left:779.6px;top:538.7px;width:1px;height:11px;background:#e6e6e6"></div>
<div class="a" style="left:803.5px;top:538.7px;width:1px;height:11px;background:#e6e6e6"></div>
<div class="a" style="left:840.6px;top:538.7px;width:1px;height:11px;background:#e6e6e6"></div>
<svg style="left:690.3px;top:539.7px" width="6" height="7" viewBox="0 0 6 7" fill="none" stroke="#666" stroke-width="0.700"><circle cx="3" cy="1.800" r="1.300"/><path d="M0.600 6.400c0-1.800 1-2.600 2.400-2.600s2.400 0.800 2.400 2.600z"/></svg>
<div class="a" style="left:701.2px;top:541.06px;font-size:5.6px;color:#222;letter-spacing:-0.19px;">Jon Hendrich</div>
<svg style="left:744px;top:541.8px" width="4" height="3" viewBox="0 0 4 3" ><path d="M0.200 0.300l1.800 2.200 1.800-2.200z" fill="#333"/></svg>
<svg style="left:807px;top:540.7px" width="30" height="5" viewBox="0 0 30 5" fill="none"><path d="M0.500 0.500v4M4 0.500l-2.500 2 2.500 2zM11 0.500l-2.500 2 2.500 2zM16.500 0.500l2.500 2-2.500 2zM24.500 0.500l2.500 2-2.500 2zM28 0.500v4" fill="#cfcfcf" stroke="#cfcfcf" stroke-width="0.500"/></svg>
<svg style="left:843.5px;top:540px" width="30" height="8" viewBox="0 0 30 8" fill="none" stroke-width="0.700"><rect x="0.500" y="0.500" width="5" height="5" stroke="#c9c9c9"/><path d="M3 0.500v5M0.500 3h5" stroke="#c9c9c9"/><rect x="10.500" y="0.500" width="5" height="5" fill="#bdbdbd" stroke="#b0b0b0"/><path d="M21.500 0.500h5l-5 5z" fill="#555" stroke="none"/></svg>
</div></body></html>
